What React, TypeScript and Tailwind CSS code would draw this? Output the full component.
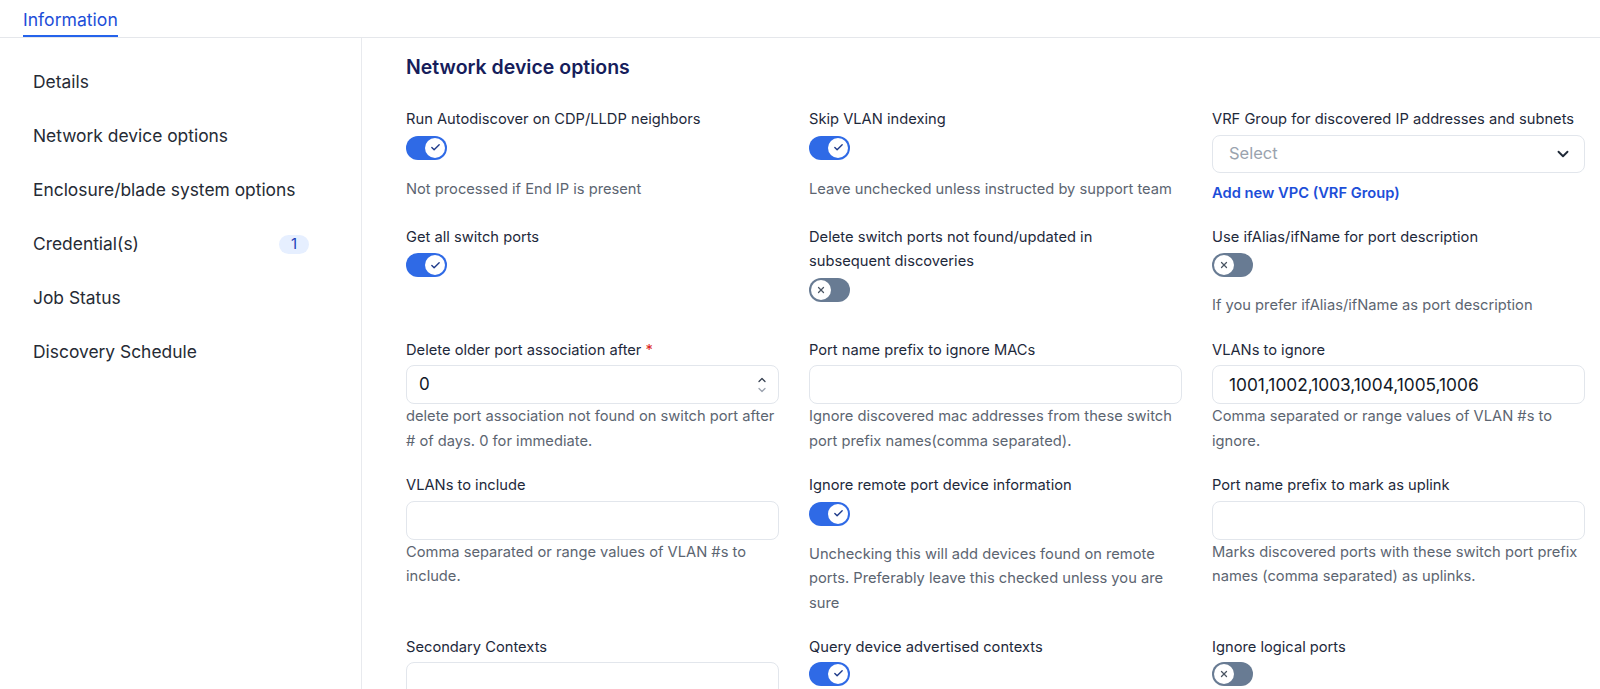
import { ChevronDown, ChevronUp, Check, X } from 'lucide-react'

const font = { fontFamily: 'Inter, "Noto Sans", "Liberation Sans", sans-serif' }

export default function App() {
  return (
    <div className="flex min-h-screen flex-col bg-white" style={font}>
      <header className="border-b border-[#e5e7eb] pl-[23px]">
        <div className="inline-block border-b-2 border-[#2563eb] pt-[8px] pb-[3px] text-[17.6px] leading-[24px] text-[#1d4ed8]">
          Information
        </div>
      </header>

      <div className="flex flex-1">
        <aside className="w-[362px] shrink-0 border-r border-[#e8eaee] pt-[17px] pl-[33px] pr-[52px]">
          <SideItem label="Details" />
          <SideItem label="Network device options" />
          <SideItem label="Enclosure/blade system options" />
          <SideItem label="Credential(s)" badge="1" />
          <SideItem label="Job Status" />
          <SideItem label="Discovery Schedule" />
        </aside>

        <main className="flex-1 pt-[15px] pl-[44px]">
          <h2 className="text-[19.5px] leading-[28px] font-semibold text-[#161d5b]">
            Network device options
          </h2>

          <div className="mt-[26px] grid grid-cols-[373px_373px_373px] gap-x-[30px] gap-y-5">
            {/* row 1 */}
            <Field label="Run Autodiscover on CDP/LLDP neighbors">
              <Toggle on />
              <Help className="mt-[17px]">Not processed if End IP is present</Help>
            </Field>
            <Field label="Skip VLAN indexing">
              <Toggle on />
              <Help className="mt-[17px]">Leave unchecked unless instructed by support team</Help>
            </Field>
            <Field label="VRF Group for discovered IP addresses and subnets">
              <div className="mt-[3px] flex h-[38px] items-center justify-between rounded-lg border border-[#e2e6ec] pl-4 pr-[12px]">
                <span className="text-[16.5px] text-[#9aa3ae]">Select</span>
                <ChevronDown className="h-[18px] w-[18px] text-[#1f2937]" strokeWidth={2.5} />
              </div>
              <a className="mt-[8px] block text-[14.7px] leading-[24px] font-semibold text-[#1d4ed8]">
                Add new VPC (VRF Group)
              </a>
            </Field>

            {/* row 2 */}
            <Field label="Get all switch ports">
              <Toggle on />
            </Field>
            <Field label="Delete switch ports not found/updated in subsequent discoveries" narrow>
              <Toggle />
            </Field>
            <Field label="Use ifAlias/ifName for port description">
              <Toggle />
              <Help className="mt-4">If you prefer ifAlias/ifName as port description</Help>
            </Field>

            {/* row 3 */}
            <Field label="Delete older port association after" required>
              <div className="mt-[3px] flex h-[39px] items-center justify-between rounded-lg border border-[#e2e6ec] pl-3 pr-[10px]">
                <span className="text-[17px] text-[#111827]">0</span>
                <div className="flex flex-col items-center">
                  <ChevronUp className="-mb-[2px] h-[12px] w-[12px] text-[#374151]" strokeWidth={2.5} />
                  <ChevronDown className="h-[12px] w-[12px] text-[#9ca3af]" strokeWidth={2.5} />
                </div>
              </div>
              <Help>delete port association not found on switch port after # of days. 0 for immediate.</Help>
            </Field>
            <Field label="Port name prefix to ignore MACs">
              <Input />
              <Help>Ignore discovered mac addresses from these switch port prefix names(comma separated).</Help>
            </Field>
            <Field label="VLANs to ignore">
              <Input value="1001,1002,1003,1004,1005,1006" />
              <Help>Comma separated or range values of VLAN #s to ignore.</Help>
            </Field>

            {/* row 4 */}
            <Field label="VLANs to include">
              <Input />
              <Help>Comma separated or range values of VLAN #s to include.</Help>
            </Field>
            <Field label="Ignore remote port device information">
              <Toggle on />
              <Help className="mt-4">
                Unchecking this will add devices found on remote ports. Preferably leave this checked unless you are sure
              </Help>
            </Field>
            <Field label="Port name prefix to mark as uplink">
              <Input />
              <Help>Marks discovered ports with these switch port prefix names (comma separated) as uplinks.</Help>
            </Field>

            {/* row 5 */}
            <Field label="Secondary Contexts">
              <Input className="mt-[2px]" />
            </Field>
            <Field label="Query device advertised contexts">
              <Toggle on className="mt-[2px]" />
            </Field>
            <Field label="Ignore logical ports">
              <Toggle className="mt-[2px]" />
            </Field>
          </div>
        </main>
      </div>
    </div>
  )
}

function SideItem({ label, badge }: { label: string; badge?: string }) {
  return (
    <div className="flex h-[54px] items-center justify-between">
      <span className="text-[17.4px] text-[#262b35]">{label}</span>
      {badge && (
        <span className="flex h-[19px] w-[30px] items-center justify-center rounded-full bg-[#e6efff] text-[15px] text-[#1e3fb8]">
          {badge}
        </span>
      )}
    </div>
  )
}

function Field({
  label,
  required,
  narrow,
  children,
}: {
  label: string
  required?: boolean
  narrow?: boolean
  children: React.ReactNode
}) {
  return (
    <div>
      <div className={`${narrow ? 'pr-6' : ''} text-[14.7px] leading-[24.5px] text-[#1e293b]`}>
        {label}
        {required && <span className="ml-1 text-[#dc2626]">*</span>}
      </div>
      {children}
    </div>
  )
}

function Input({ value, className = 'mt-[3px]' }: { value?: string; className?: string }) {
  return (
    <div className={`${className} flex h-[39px] items-center rounded-lg border border-[#e2e6ec] pl-4`}>
      <span className="text-[17.3px] text-[#111827]">{value}</span>
    </div>
  )
}

function Help({ children, className = '' }: { children: React.ReactNode; className?: string }) {
  return <p className={`text-[14.7px] leading-[24.5px] text-[#5c6571] ${className}`}>{children}</p>
}

function Toggle({ on, className = 'mt-1' }: { on?: boolean; className?: string }) {
  return (
    <div
      className={`${className} flex h-[24px] w-[41px] items-center rounded-full px-[2px] ${
        on ? 'justify-end bg-[#2f6ae6]' : 'justify-start bg-[#687b93]'
      }`}
    >
      <span className="flex h-[20px] w-[20px] items-center justify-center rounded-full bg-white">
        {on ? (
          <Check className="h-[11px] w-[11px] text-[#1e3a8a]" strokeWidth={3} />
        ) : (
          <X className="h-[10px] w-[10px] text-[#4b5563]" strokeWidth={3} />
        )}
      </span>
    </div>
  )
}
